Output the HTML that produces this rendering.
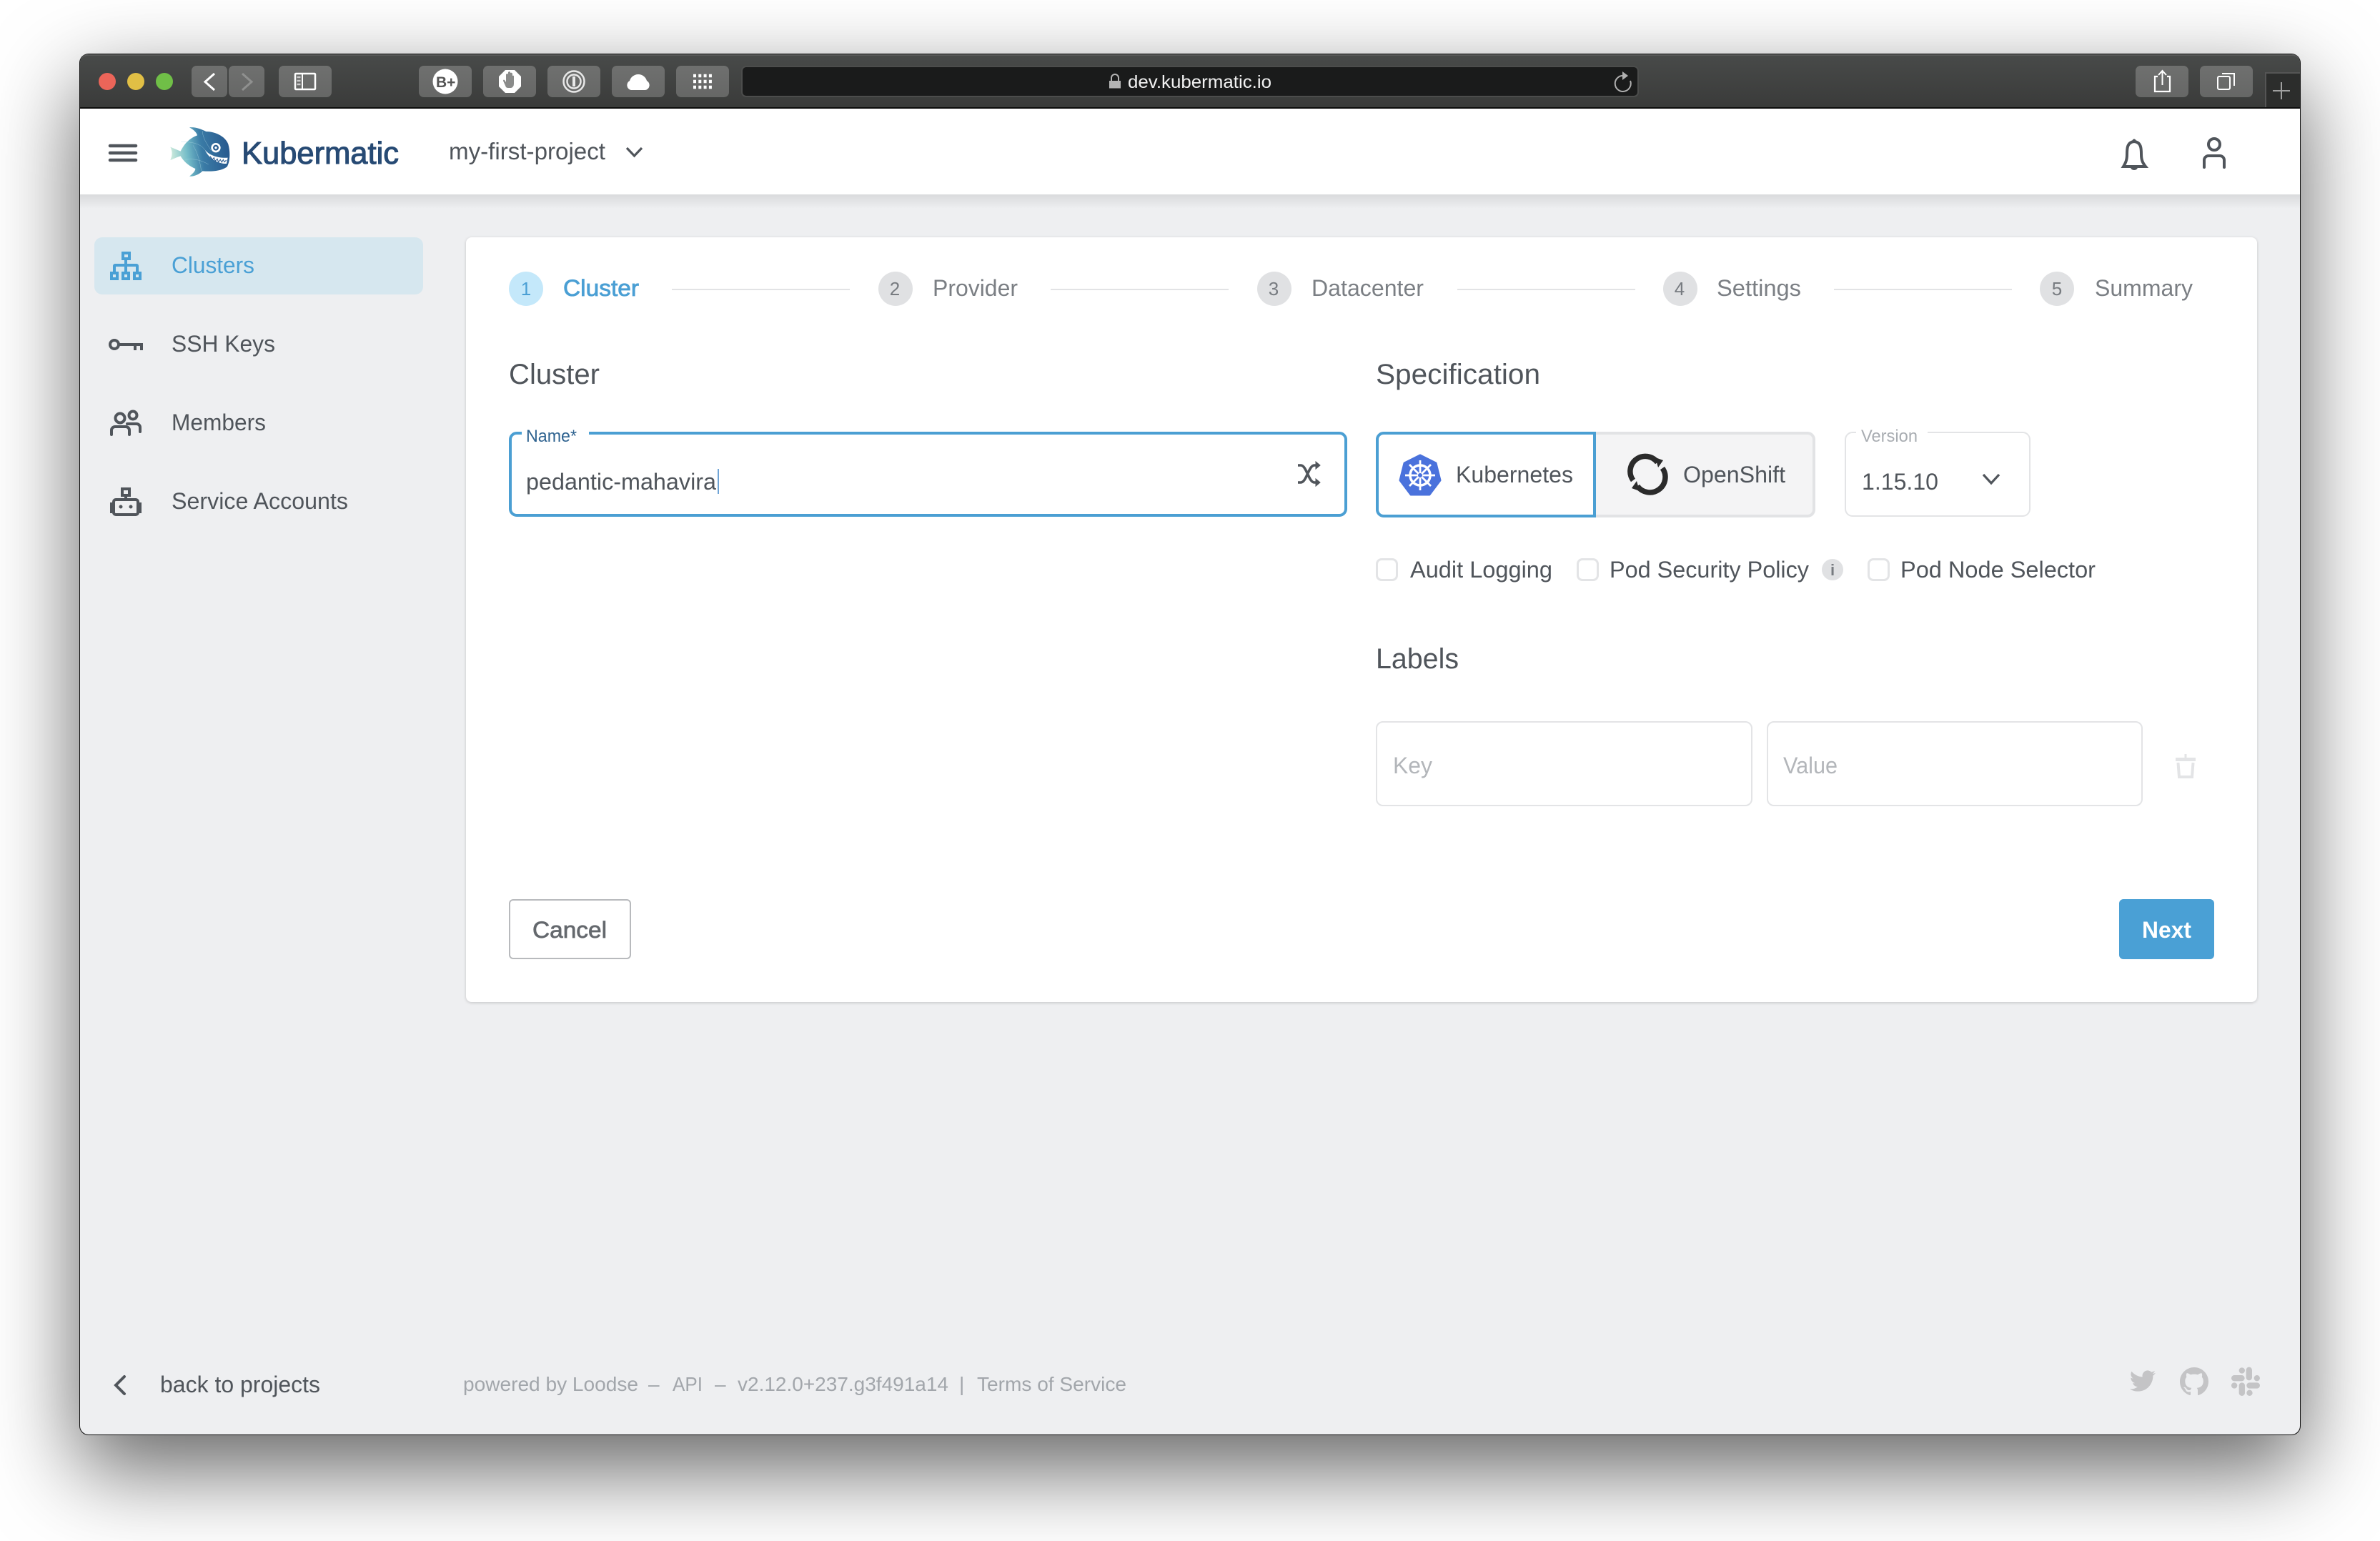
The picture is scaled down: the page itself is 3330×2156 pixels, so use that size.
<!DOCTYPE html>
<html lang="en"><head><meta charset="utf-8"><title>Kubermatic</title>
<style>
html,body{margin:0;padding:0;background:#fff;width:3330px;height:2156px;overflow:hidden}
#p{position:relative;width:3330px;height:2156px;overflow:hidden;background:#fff}
#p div{position:absolute;box-sizing:border-box}
svg{position:absolute;left:0;top:0}
text{font-family:"Liberation Sans",Arial,sans-serif;font-size:32px;fill:#50555b}
.btn{background:linear-gradient(#6f706f,#666766);border-radius:7px;top:92px;height:44px}
</style></head><body><div id="p">
<div style="left:112px;top:76px;width:3106px;height:1931px;border-radius:12px;background:#eeeff1;box-shadow:0 46px 120px 4px rgba(0,0,0,.6),0 0 0 1px #111"></div>
<div style="left:112px;top:76px;width:3106px;height:76px;border-radius:11px 11px 0 0;background:linear-gradient(#484a49,#3a3b3a);border-top:2px solid #5a5b5a;border-bottom:2px solid #0c0c0c"></div>
<div class="btn" style="left:268px;width:50px"></div><div class="btn" style="left:320px;width:50px"></div>
<div class="btn" style="left:390px;width:74px"></div><div class="btn" style="left:586px;width:74px"></div>
<div class="btn" style="left:676px;width:74px"></div><div class="btn" style="left:766px;width:74px"></div>
<div class="btn" style="left:856px;width:74px"></div><div class="btn" style="left:946px;width:74px"></div>
<div class="btn" style="left:2988px;width:74px"></div><div class="btn" style="left:3078px;width:74px"></div>
<div style="left:1037px;top:92px;width:1256px;height:44px;background:#1a1b1b;border:2px solid #4c4d4c;border-radius:7px"></div>
<div style="left:3169px;top:101px;width:49px;height:49px;background:#2c2d2c;border:solid #555;border-width:2px 0 0 2px"></div>
<div style="left:112px;top:152px;width:3106px;height:120px;background:#fff"></div>
<div style="left:112px;top:272px;width:3106px;height:20px;background:linear-gradient(#d9dadc,#eeeff1)"></div>
<div style="left:132px;top:332px;width:460px;height:80px;background:#d6e7ef;border-radius:11px"></div>
<div style="left:652px;top:332px;width:2506px;height:1070px;background:#fff;border-radius:8px;box-shadow:0 1px 4px rgba(0,0,0,.18)"></div>
<div style="left:712px;top:604px;width:1173px;height:119px;border:4px solid #4b9fd3;border-radius:11px"></div>
<div style="left:730px;top:600px;width:94px;height:12px;background:#fff"></div>
<div style="left:1925px;top:604px;width:615px;height:120px;border:4px solid #e2e3e5;border-radius:11px;background:#f4f4f5"></div>
<div style="left:1925px;top:604px;width:308px;height:120px;border:4px solid #4b9fd3;border-radius:11px 0 0 11px;background:#fff"></div>
<div style="left:2581px;top:604px;width:260px;height:119px;border:2px solid #e3e4e6;border-radius:11px"></div>
<div style="left:2597px;top:600px;width:100px;height:10px;background:#fff"></div>
<div style="left:1925px;top:781px;width:31px;height:32px;border:3px solid #e3e4e6;border-radius:8px"></div>
<div style="left:2206px;top:781px;width:31px;height:32px;border:3px solid #e3e4e6;border-radius:8px"></div>
<div style="left:2613px;top:781px;width:31px;height:32px;border:3px solid #e3e4e6;border-radius:8px"></div>
<div style="left:1925px;top:1009px;width:527px;height:119px;border:2px solid #e3e4e6;border-radius:10px"></div>
<div style="left:2472px;top:1009px;width:526px;height:119px;border:2px solid #e3e4e6;border-radius:10px"></div>
<div style="left:712px;top:1258px;width:171px;height:84px;border:2px solid #b8babd;border-radius:6px;background:#fff"></div>
<div style="left:2965px;top:1258px;width:133px;height:84px;background:#4aa0d5;border-radius:6px"></div>
<svg width="3330" height="2156" viewBox="0 0 3330 2156" xmlns="http://www.w3.org/2000/svg">
<defs>
<linearGradient id="f" x1="0" x2="1" y1=".2" y2=".1"><stop offset="0" stop-color="#c4e6da"/><stop offset=".25" stop-color="#74bcc8"/><stop offset=".5" stop-color="#3a7ba6"/><stop offset="1" stop-color="#26568c"/></linearGradient>
</defs>
<!-- traffic lights -->
<circle cx="150" cy="114" r="12" fill="#ec6559"/><circle cx="190" cy="114" r="12" fill="#e1bf45"/><circle cx="230" cy="114" r="12" fill="#70bf47"/>
<!-- toolbar icons -->
<path d="M300 103 L287 114.500 L300 126" fill="none" stroke="#fff" stroke-width="3"/>
<path d="M339 103 L352 114.500 L339 126" fill="none" stroke="#8f908f" stroke-width="3"/>
<rect x="413" y="103" width="28" height="22" fill="none" stroke="#fff" stroke-width="2.500" rx="1"/><path d="M423 103V125" stroke="#fff" stroke-width="2"/><path d="M415.500 108h5M415.500 113h5M415.500 118h5" stroke="#ccc" stroke-width="2.500"/>
<circle cx="623" cy="114" r="17.500" fill="#fff"/><text x="610" y="122" style="font-size:21px;font-weight:bold;fill:#555">B+</text>
<polygon points="707,98 720,98 729,107 729,121 720,130 707,130 698,121 698,107" fill="#fff"/>
<path d="M708 122 l-4-9 q0-2 2-1l2 3v-11q2-2 3 0v-3q2-2 3 0v1q2-1 3 1v3q2-1 2 1v10q0 5-4 6h-4q-2 0-3-1z" fill="#8a8b8a"/>
<circle cx="803" cy="114" r="14.500" fill="none" stroke="#e8e8e8" stroke-width="2.500"/><circle cx="803" cy="114" r="9.500" fill="none" stroke="#e8e8e8" stroke-width="2.500"/><rect x="801" y="107" width="4" height="14" fill="#e8e8e8"/>
<path d="M883 126 a7 7 0 0 1-2-13 a12.500 12.500 0 0 1 24 0 a7 7 0 0 1-2 13z" fill="#fff"/>
<path d="M970 106h26M970 114h26M970 122h26" stroke="#fff" stroke-width="4.500" stroke-dasharray="4 3.300" fill="none"/>
<rect x="1552" y="113" width="16" height="10.500" fill="#b5b5b5"/><path d="M1555 113v-4a5 5 0 0 1 10 0v4" fill="none" stroke="#b5b5b5" stroke-width="2"/>
<text x="1578" y="123" textLength="201" lengthAdjust="spacingAndGlyphs" style="font-size:25px;fill:#f2f2f2">dev.kubermatic.io</text>
<path d="M2272 106 a11 11 0 1 0 9 7" fill="none" stroke="#b0b0b0" stroke-width="2"/><path d="M2270 100 l8 6 l-8 6z" fill="#b0b0b0"/>
<path d="M3019 107h-4v21h21v-21h-4" fill="none" stroke="#fff" stroke-width="2.200"/><path d="M3025.500 119V99M3020 105l5.500-6 5.500 6" fill="none" stroke="#fff" stroke-width="2"/>
<rect x="3103" y="107" width="17" height="18" fill="none" stroke="#fff" stroke-width="2" rx="2"/><path d="M3109 103h17v17" fill="none" stroke="#fff" stroke-width="2"/>
<path d="M3192 115v24M3180 127h24" stroke="#a0a0a0" stroke-width="2"/>
<!-- header -->
<path d="M154 204h36M154 214h36M154 224h36" stroke="#50555b" stroke-width="4.500" stroke-linecap="round"/>
<g transform="translate(220 160) scale(.3333)">
<path d="M135 55 C160 52 185 62 205 72 C240 72 285 90 298 125 C308 160 305 200 293 220 C265 240 225 240 190 238 C178 250 155 262 135 260 C150 248 160 238 160 228 C135 218 112 200 98 175 C82 180 65 188 55 192 C64 172 64 155 55 137 C70 143 85 150 98 155 C112 125 135 100 168 88 C165 75 150 62 135 55Z" fill="url(#f)"/>
<path d="M190 70C190 100 210 125 225 150M100 115C150 115 185 125 200 150M118 190C150 185 180 190 215 210M150 130C170 160 180 200 185 238" fill="none" stroke="#a8d3e0" stroke-width="1.500" opacity=".7"/>
<path d="M200 148 C215 170 255 185 296 182 L291 207 C255 208 215 185 200 148Z" fill="#fff"/>
<path d="M222 176l10 14 6-8 6 14 8-9 5 13 8-10 6 11 6-11 5 10 8-8" fill="none" stroke="#28598e" stroke-width="3"/>
<circle cx="246" cy="140" r="20" fill="#fff"/><circle cx="246" cy="140" r="12" fill="#2a5d90"/><circle cx="246" cy="140" r="5" fill="#fff"/>
</g>
<text x="338" y="229" textLength="220" lengthAdjust="spacingAndGlyphs" style="font-size:44px;fill:#274a74;stroke:#274a74;stroke-width:1.100px">Kubermatic</text>
<text x="628" y="223" textLength="219" lengthAdjust="spacingAndGlyphs" style="font-size:33px">my-first-project</text>
<path d="M877 207 L887.500 218 L898 207" fill="none" stroke="#50555b" stroke-width="3.200"/>
<!-- bell -->
<path d="M2986 198 C2976 199 2976 208 2976 216 C2976 224 2974 228 2971 233 H3002 C2998 228 2996 224 2996 216 C2996 208 2996 199 2986 198Z" fill="none" stroke="#50555b" stroke-width="4"/><circle cx="2986" cy="197" r="2.500" fill="#50555b"/><path d="M2981 234a5 4 0 0 0 10 0z" fill="#50555b"/>
<circle cx="3098" cy="202" r="8" fill="none" stroke="#50555b" stroke-width="4"/>
<path d="M3084 234v-10a6 6 0 0 1 6-6h16a6 6 0 0 1 6 6v10" fill="none" stroke="#50555b" stroke-width="4" stroke-linecap="round"/>
<!-- sidebar icons -->
<g fill="none" stroke="#4aa0d5" stroke-width="4">
<rect x="172" y="354" width="9" height="8"/><rect x="156" y="382" width="8" height="8"/><rect x="172" y="382" width="8" height="8"/><rect x="188" y="382" width="8" height="8"/>
<path d="M176 363v17M160 380v-8a1 1 0 0 1 1-1h30a1 1 0 0 1 1 1v8"/></g>
<g fill="none" stroke="#50555b" stroke-width="4">
<circle cx="160" cy="482" r="6"/><path d="M167 482h33M189 482v8M198 482v8"/>
<circle cx="168" cy="585" r="6.500"/><circle cx="186" cy="581" r="5.500"/>
<path d="M156 608v-6a5 5 0 0 1 5-5h15a5 5 0 0 1 5 5v6M178 593h13a5 5 0 0 1 5 5v6" stroke-linecap="round"/>
<rect x="171" y="684" width="10" height="9"/><path d="M176 693v6"/><rect x="159" y="699" width="34" height="21" rx="3"/><path d="M157 705h-1v11h1M195 705h1v11h-1"/>
</g>
<circle cx="169" cy="709" r="2.500" fill="#50555b"/><circle cx="183" cy="709" r="2.500" fill="#50555b"/>
<text x="240" y="382" textLength="116" lengthAdjust="spacingAndGlyphs" style="fill:#4aa0d5">Clusters</text>
<text x="240" y="492" textLength="145" lengthAdjust="spacingAndGlyphs">SSH Keys</text>
<text x="240" y="602" textLength="132" lengthAdjust="spacingAndGlyphs">Members</text>
<text x="240" y="712" textLength="247" lengthAdjust="spacingAndGlyphs">Service Accounts</text>
<!-- stepper -->
<circle cx="736" cy="404" r="24" fill="#c4e8fa"/><circle cx="1253" cy="404" r="24" fill="#e0e1e3"/><circle cx="1783" cy="404" r="24" fill="#e0e1e3"/><circle cx="2351" cy="404" r="24" fill="#e0e1e3"/><circle cx="2878" cy="404" r="24" fill="#e0e1e3"/>
<g>
<text x="736" y="413" text-anchor="middle" style="font-size:26px;fill:#4a9fd4">1</text><text x="1252" y="413" text-anchor="middle" style="font-size:26px;fill:#777b80">2</text><text x="1782" y="413" text-anchor="middle" style="font-size:26px;fill:#777b80">3</text><text x="2350" y="413" text-anchor="middle" style="font-size:26px;fill:#777b80">4</text><text x="2878" y="413" text-anchor="middle" style="font-size:26px;fill:#777b80">5</text>
</g>
<text x="788" y="414" textLength="106" lengthAdjust="spacingAndGlyphs" style="fill:#4a9fd4;stroke:#4a9fd4;stroke-width:.8px">Cluster</text>
<text x="1305" y="414" textLength="119" lengthAdjust="spacingAndGlyphs" style="fill:#7b7f84">Provider</text>
<text x="1835" y="414" textLength="157" lengthAdjust="spacingAndGlyphs" style="fill:#7b7f84">Datacenter</text>
<text x="2402" y="414" textLength="118" lengthAdjust="spacingAndGlyphs" style="fill:#7b7f84">Settings</text>
<text x="2931" y="414" textLength="137" lengthAdjust="spacingAndGlyphs" style="fill:#7b7f84">Summary</text>
<path d="M940 405h249M1470 405h249M2039 405h249M2566 405h249" stroke="#e2e3e5" stroke-width="2"/>
<!-- titles -->
<text x="712" y="537" textLength="127" lengthAdjust="spacingAndGlyphs" style="font-size:40px">Cluster</text>
<text x="1925" y="537" textLength="230" lengthAdjust="spacingAndGlyphs" style="font-size:40px">Specification</text>
<text x="1925" y="935" textLength="116" lengthAdjust="spacingAndGlyphs" style="font-size:40px">Labels</text>
<!-- name field -->
<text x="736" y="618" textLength="71" lengthAdjust="spacingAndGlyphs" style="font-size:24px;fill:#2f6390">Name*</text>
<text x="736" y="685" textLength="266" lengthAdjust="spacingAndGlyphs">pedantic-mahavira</text>
<path d="M1005 656v35" stroke="#3f86c8" stroke-width="1.500"/>
<path d="M1816 651h4c8 0 11 24 19 24h5M1816 675h4c8 0 11-24 19-24h5" fill="none" stroke="#50555b" stroke-width="3.600"/>
<path d="M1841 646l6 5-6 5zM1841 670l6 5-6 5z" fill="#50555b" stroke="#50555b" stroke-width="1"/>
<!-- kubernetes -->
<polygon points="1987,637 2009,648 2015,672 2000,692 1974,692 1959,672 1965,648" fill="#4a72dc" stroke="#4a72dc" stroke-width="3" stroke-linejoin="round"/>
<g fill="none" stroke="#fff"><circle cx="1987" cy="665" r="14" stroke-width="3.500"/><path d="M1987 644v42M1966 665h42M1972 650l30 30M2002 650l-30 30" stroke-width="2.800"/></g>
<circle cx="1987" cy="665" r="3" fill="#4a72dc"/>
<text x="2037" y="675" textLength="164" lengthAdjust="spacingAndGlyphs">Kubernetes</text>
<!-- openshift -->
<g fill="none" stroke="#2b2b2b" stroke-width="7.500"><path d="M2285 672 A21 21 0 0 1 2319 647"/><path d="M2326 655 A21 21 0 0 1 2291 680"/></g>
<path d="M2316 640l11 4-7 10zM2294 687l-11-4 7-10z" fill="#2b2b2b"/>
<text x="2355" y="675" textLength="143" lengthAdjust="spacingAndGlyphs">OpenShift</text>
<!-- version -->
<text x="2604" y="618" textLength="79" lengthAdjust="spacingAndGlyphs" style="font-size:24px;fill:#a9adb2">Version</text>
<text x="2605" y="685" textLength="107" lengthAdjust="spacingAndGlyphs">1.15.10</text>
<path d="M2775 664 L2786 676 L2797 664" fill="none" stroke="#50555b" stroke-width="3.200"/>
<!-- checkboxes -->
<text x="1973" y="808" textLength="199" lengthAdjust="spacingAndGlyphs">Audit Logging</text>
<text x="2252" y="808" textLength="279" lengthAdjust="spacingAndGlyphs">Pod Security Policy</text>
<circle cx="2564" cy="797" r="15" fill="#e0e1e3"/><text x="2564" y="805" text-anchor="middle" style="font-size:22px;fill:#777b80;font-weight:bold">i</text>
<text x="2659" y="808" textLength="273" lengthAdjust="spacingAndGlyphs">Pod Node Selector</text>
<!-- labels -->
<text x="1949" y="1082" textLength="55" lengthAdjust="spacingAndGlyphs" style="fill:#b3b6ba">Key</text>
<text x="2495" y="1082" textLength="76" lengthAdjust="spacingAndGlyphs" style="fill:#b3b6ba">Value</text>
<path d="M3044 1062.500h28" stroke="#e3e4e6" stroke-width="5"/><path d="M3058 1055v6" stroke="#e3e4e6" stroke-width="3"/>
<path d="M3047.500 1067l1.500 20h18l1.500-20" fill="none" stroke="#e3e4e6" stroke-width="4"/>
<!-- buttons -->
<text x="745" y="1312" textLength="104" lengthAdjust="spacingAndGlyphs" style="fill:#64686d;stroke:#64686d;stroke-width:.7px">Cancel</text>
<text x="2997" y="1312" textLength="69" lengthAdjust="spacingAndGlyphs" style="fill:#fff;font-weight:bold">Next</text>
<!-- footer -->
<path d="M174 1926 L162 1938 L174 1950" fill="none" stroke="#50555b" stroke-width="4" stroke-linecap="round"/>
<text x="224" y="1948" textLength="224" lengthAdjust="spacingAndGlyphs">back to projects</text>
<g>
<text x="648" y="1946" textLength="245" lengthAdjust="spacingAndGlyphs" style="font-size:28px;fill:#a2a6ab">powered by Loodse</text>
<text x="907" y="1946" style="font-size:28px;fill:#a2a6ab">–</text>
<text x="941" y="1946" textLength="42" lengthAdjust="spacingAndGlyphs" style="font-size:28px;fill:#a2a6ab">API</text>
<text x="1000" y="1946" style="font-size:28px;fill:#a2a6ab">–</text>
<text x="1032" y="1946" textLength="295" lengthAdjust="spacingAndGlyphs" style="font-size:28px;fill:#a2a6ab">v2.12.0+237.g3f491a14</text>
<text x="1342" y="1946" style="font-size:28px;fill:#a2a6ab">|</text>
<text x="1367" y="1946" textLength="209" lengthAdjust="spacingAndGlyphs" style="font-size:28px;fill:#a2a6ab">Terms of Service</text>
</g>
<path transform="translate(2980 1914) scale(1.5)" d="M23.953 4.57a10 10 0 01-2.825.775 4.958 4.958 0 002.163-2.723c-.951.555-2.005.959-3.127 1.184a4.92 4.92 0 00-8.384 4.482C7.69 8.095 4.067 6.13 1.64 3.162a4.822 4.822 0 00-.666 2.475c0 1.71.87 3.213 2.188 4.096a4.904 4.904 0 01-2.228-.616v.06a4.923 4.923 0 003.946 4.827 4.996 4.996 0 01-2.212.085 4.936 4.936 0 004.604 3.417 9.867 9.867 0 01-6.102 2.105c-.39 0-.779-.023-1.17-.067a13.995 13.995 0 007.557 2.209c9.053 0 13.998-7.496 13.998-13.985 0-.21 0-.42-.015-.63A9.935 9.935 0 0024 4.59z" fill="#c4c4c6"/>
<path transform="translate(3050 1913) scale(2.500)" d="M8 0C3.58 0 0 3.58 0 8c0 3.54 2.29 6.53 5.47 7.59.4.07.55-.17.55-.38 0-.19-.01-.82-.01-1.49-2.01.37-2.53-.49-2.69-.94-.09-.23-.48-.94-.82-1.13-.28-.15-.68-.52-.01-.53.63-.01 1.08.58 1.23.82.72 1.21 1.87.87 2.33.66.07-.52.28-.87.51-1.07-1.78-.2-3.64-.89-3.64-3.95 0-.87.31-1.59.82-2.15-.08-.2-.36-1.02.08-2.12 0 0 .67-.21 2.2.82.64-.18 1.32-.27 2-.27.68 0 1.36.09 2 .27 1.53-1.04 2.2-.82 2.2-.82.44 1.1.16 1.92.08 2.12.51.56.82 1.27.82 2.15 0 3.07-1.87 3.75-3.65 3.95.29.25.54.73.54 1.48 0 1.07-.01 1.93-.01 2.2 0 .21.15.46.55.38A8.013 8.013 0 0016 8c0-4.42-3.58-8-8-8z" fill="#c4c4c6"/>
<g transform="translate(2900 1860) scale(.3333)" fill="#c4c4c6">
<rect x="728" y="158" width="25" height="56" rx="12.500"/><rect x="698" y="160" width="25" height="25" rx="12.500"/>
<rect x="666" y="192" width="56" height="25" rx="12.500"/><rect x="666" y="223" width="25" height="25" rx="12.500"/>
<rect x="698" y="223" width="25" height="56" rx="12.500"/><rect x="730" y="254" width="25" height="25" rx="12.500"/>
<rect x="730" y="223" width="56" height="25" rx="12.500"/><rect x="761" y="192" width="25" height="25" rx="12.500"/>
</g>
</svg>
</div></body></html>
